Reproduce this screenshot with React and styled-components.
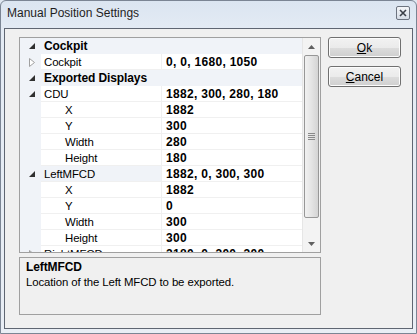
import React from "react";
import styled, { createGlobalStyle } from "styled-components";

const GlobalStyle = createGlobalStyle`
  html, body {
    margin: 0;
    padding: 0;
    background: #dfe7f1;
  }
  body {
    font-family: "Segoe UI", "Liberation Sans", Arial, sans-serif;
    font-size: 11.4px;
    letter-spacing: -0.1px;
    color: #000;
  }
`;

const Window = styled.div`
  width: 417px;
  height: 334px;
  box-sizing: border-box;
  border: 1px solid #7b8594;
  border-radius: 6px 6px 0 0;
  background: linear-gradient(#dbe5f1, #e4ebf4 30px, #e9eef5);
  display: flex;
  flex-direction: column;
  padding: 0 3px 4px 3px;
  overflow: hidden;
`;

const TitleBar = styled.div`
  height: 27px;
  flex: none;
  display: flex;
  align-items: center;
  justify-content: space-between;
  padding: 0 2px 0 3px;
`;

const Title = styled.div`
  font-size: 12px;
  letter-spacing: 0;
  color: #1e1e1e;
  margin-top: -3px;
`;

const CloseBox = styled.div`
  width: 12px;
  height: 12px;
  border: 1px solid #6d7480;
  border-radius: 2px;
  background: linear-gradient(#f4f6f9, #d6dde7);
  display: flex;
  align-items: center;
  justify-content: center;
  margin-top: -3px;
  margin-right: 1px;
`;

const Client = styled.div`
  flex: 1;
  border: 1px solid #5f6672;
  background: #f0f0f0;
  display: flex;
  gap: 7px;
  padding: 8px 0 0 14px;
`;

const LeftColumn = styled.div`
  display: flex;
  flex-direction: column;
  gap: 4px;
  width: 302px;
`;

const Grid = styled.div`
  height: 216px;
  box-sizing: border-box;
  border: 1px solid #a0a0a0;
  background: #fff;
  display: flex;
  overflow: hidden;
`;

const Rows = styled.div`
  flex: 1;
  overflow: hidden;
`;

const Row = styled.div`
  display: flex;
  height: 16px;
  line-height: 16px;
  background: ${(p) => (p.category ? "#f0f3f8" : "transparent")};
`;

const Margin = styled.div`
  width: 21px;
  flex: none;
  background: #f0f3f8;
  display: flex;
  align-items: center;
  justify-content: center;
  padding-left: 3px;
  box-sizing: border-box;
`;

const Name = styled.div`
  width: 120px;
  flex: none;
  padding-left: ${(p) => (p.sub ? 24 : 3)}px;
  box-sizing: border-box;
  border-bottom: ${(p) => (p.category ? "none" : "1px solid #f0f0f0")};
  white-space: nowrap;
  overflow: ${(p) => (p.category ? "visible" : "hidden")};
  font-weight: ${(p) => (p.category ? "bold" : "normal")};
  font-size: ${(p) => (p.category ? "12px" : "inherit")};
  letter-spacing: ${(p) => (p.category ? "-0.1px" : "inherit")};
  background: ${(p) => (p.selected ? "#f0f3f8" : "transparent")};
`;

const Value = styled.div`
  flex: 1;
  padding-left: 4px;
  border-left: 1px solid #f0f0f0;
  border-bottom: 1px solid #f0f0f0;
  font-weight: bold;
  font-size: 12px;
  letter-spacing: 0.3px;
  white-space: nowrap;
  overflow: hidden;
`;

const ScrollBar = styled.div`
  width: 17px;
  flex: none;
  background: #f3f3f3;
  border-left: 1px solid #e6e6e6;
  display: flex;
  flex-direction: column;
`;

const ArrowButton = styled.div`
  height: 17px;
  flex: none;
  display: flex;
  align-items: center;
  justify-content: center;
`;

const Thumb = styled.div`
  height: 163px;
  margin: 0 1px;
  box-sizing: border-box;
  border: 1px solid #979797;
  border-radius: 2px;
  background: linear-gradient(90deg, #f1f1f1, #e4e4e4 50%, #d4d4d4);
  display: flex;
  align-items: center;
  justify-content: center;
`;

const Track = styled.div`
  flex: 1;
`;

const Description = styled.div`
  height: 58px;
  box-sizing: border-box;
  border: 1px solid #a0a0a0;
  background: #f0f0f0;
  padding: 2px 6px;
  line-height: 15px;
`;

const DescTitle = styled.div`
  font-weight: bold;
  font-size: 12px;
`;

const Buttons = styled.div`
  display: flex;
  flex-direction: column;
  gap: 8px;
`;

const Button = styled.button`
  width: 73px;
  height: 21px;
  border: 1px solid #707070;
  border-radius: 3px;
  background: linear-gradient(#f2f2f2, #ebebeb 50%, #dddddd 51%, #cfcfcf);
  font-family: inherit;
  font-size: 12px;
  color: #000;
  padding: 0;
  box-shadow: inset 0 0 0 1px #fcfcfc;
  u {
    text-decoration: underline;
  }
`;

const Expanded = () => (
  <svg width="6" height="6" viewBox="0 0 6 6">
    <polygon points="6,0 6,6 0,6" fill="#303030" />
  </svg>
);

const Collapsed = () => (
  <svg width="6" height="9" viewBox="0 0 6 9">
    <polygon points="0.5,0.5 5.5,4.5 0.5,8.5" fill="#fff" stroke="#a0a0a0" />
  </svg>
);

const rows = [
  { type: "cat", name: "Cockpit" },
  { name: "Cockpit", value: "0, 0, 1680, 1050", glyph: "c" },
  { type: "cat", name: "Exported Displays" },
  { name: "CDU", value: "1882, 300, 280, 180", glyph: "e" },
  { name: "X", value: "1882", sub: true },
  { name: "Y", value: "300", sub: true },
  { name: "Width", value: "280", sub: true },
  { name: "Height", value: "180", sub: true },
  { name: "LeftMFCD", value: "1882, 0, 300, 300", glyph: "e", selected: true },
  { name: "X", value: "1882", sub: true },
  { name: "Y", value: "0", sub: true },
  { name: "Width", value: "300", sub: true },
  { name: "Height", value: "300", sub: true },
  { name: "RightMFCD", value: "2180, 0, 300, 300", glyph: "c" },
];

export default function App() {
  return (
    <>
      <GlobalStyle />
      <Window>
        <TitleBar>
          <Title>Manual Position Settings</Title>
          <CloseBox>
            <svg width="8" height="8" viewBox="0 0 8 8">
              <path d="M1 1 L7 7 M7 1 L1 7" stroke="#3a3f48" strokeWidth="1.6" />
            </svg>
          </CloseBox>
        </TitleBar>
        <Client>
          <LeftColumn>
            <Grid>
              <Rows>
                {rows.map((r, i) =>
                  r.type === "cat" ? (
                    <Row key={i} category>
                      <Margin>
                        <Expanded />
                      </Margin>
                      <Name category>{r.name}</Name>
                    </Row>
                  ) : (
                    <Row key={i}>
                      <Margin>
                        {r.glyph === "e" && <Expanded />}
                        {r.glyph === "c" && <Collapsed />}
                      </Margin>
                      <Name sub={r.sub} selected={r.selected}>
                        {r.name}
                      </Name>
                      <Value>{r.value}</Value>
                    </Row>
                  )
                )}
              </Rows>
              <ScrollBar>
                <ArrowButton>
                  <svg width="7" height="4" viewBox="0 0 7 4">
                    <polygon points="3.5,0 7,4 0,4" fill="#606060" />
                  </svg>
                </ArrowButton>
                <Thumb>
                  <svg width="7" height="7" viewBox="0 0 7 7">
                    <path d="M0 0.5 H7 M0 2.5 H7 M0 4.5 H7 M0 6.5 H7" stroke="#8a8a8a" />
                  </svg>
                </Thumb>
                <Track />
                <ArrowButton>
                  <svg width="7" height="4" viewBox="0 0 7 4">
                    <polygon points="0,0 7,0 3.5,4" fill="#606060" />
                  </svg>
                </ArrowButton>
              </ScrollBar>
            </Grid>
            <Description>
              <DescTitle>LeftMFCD</DescTitle>
              <div>Location of the Left MFCD to be exported.</div>
            </Description>
          </LeftColumn>
          <Buttons>
            <Button>
              <u>O</u>k
            </Button>
            <Button>
              <u>C</u>ancel
            </Button>
          </Buttons>
        </Client>
      </Window>
    </>
  );
}
